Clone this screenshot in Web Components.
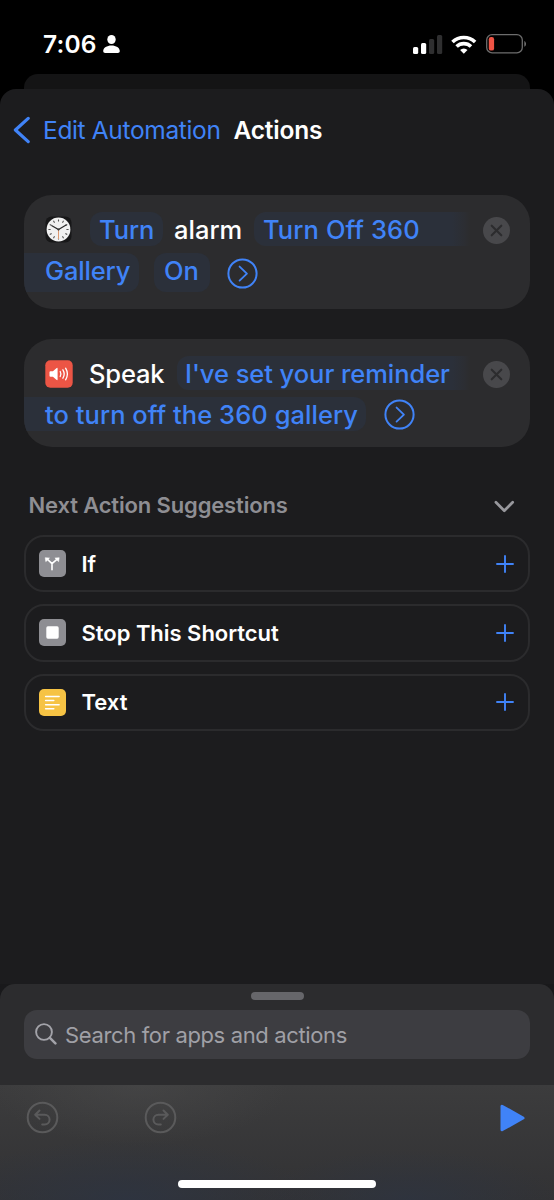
<!DOCTYPE html>
<html lang="en">
<head>
<meta charset="utf-8">
<meta name="viewport" content="width=device-width, initial-scale=1">
<title>Actions</title>
<style>
  html, body {
    margin: 0;
    background: #000;
  }
  body {
    font-family: Inter, "Liberation Sans", sans-serif;
    color: #fff;
    --blue: #4083f7;
    --sheet: #1c1c1e;
    --card: #2c2c2e;
    --token: #2b303a;
  }
</style>
</head>
<body>
<phone-screen>
  <status-bar slot="status" time="7:06"></status-bar>
  <nav-header back="Edit Automation">Actions</nav-header>

  <action-card style="height: 114px; margin-top: 23px">
    <action-line>
      <app-icon name="clock" style="margin: 1px 0 0 21px"></app-icon>
      <param-token style="margin-left: 18px; width: 73px; --ls: -0.1px">Turn</param-token>
      <plain-text style="margin-left: 11px; width: 80px">alarm</plain-text>
      <param-token open-end style="flex: 1; --ls: 0.1px">Turn Off 360</param-token>
    </action-line>
    <action-line style="height: 39px; margin-top: 7px; --lift: -3px">
      <param-token open-start style="width: 115px; --ls: -0.15px">Gallery</param-token>
      <param-token style="margin-left: 15px; width: 56px; --inset: 10px">On</param-token>
      <app-icon name="disclose" style="margin: 2px 0 0 17px"></app-icon>
    </action-line>
  </action-card>

  <action-card style="height: 108px; margin-top: 30px">
    <action-line>
      <app-icon name="speaker" style="margin: 2px 0 0 21px"></app-icon>
      <plain-text style="margin-left: 16px; width: 88px; --ls: -0.15px">Speak</plain-text>
      <param-token open-end style="flex: 1; --ls: -0.05px; --inset: 8px">I've set your reminder</param-token>
    </action-line>
    <action-line style="margin-top: 7px">
      <param-token open-start style="width: 342px; --ls: 0.05px">to turn off the 360 gallery</param-token>
      <app-icon name="disclose" style="margin: 1px 0 0 17.5px"></app-icon>
    </action-line>
  </action-card>

  <suggestion-list heading="Next Action Suggestions">
    <suggestion-row icon="branch">If</suggestion-row>
    <suggestion-row icon="stop">Stop This Shortcut</suggestion-row>
    <suggestion-row icon="text">Text</suggestion-row>
  </suggestion-list>

  <search-panel slot="bottom">Search for apps and actions</search-panel>
  <tool-bar slot="bottom"></tool-bar>
</phone-screen>

<script>
// Small helper: every component renders static markup into an open root
class BaseElement extends HTMLElement {
  constructor() {
    super();
    this.attachShadow({ mode: 'open' });
  }

  connectedCallback() {
    this.shadowRoot.innerHTML = this.render();
  }
}

const ticks = Array.from({ length: 12 }, (_, i) =>
  `<path d="M13.5 3.4v2.2" transform="rotate(${i * 30} 13.5 13.5)"/>`).join('');

// name -> [width, height, svg content]
const ICONS = {
  person: [17, 18, `<g fill="#fff"><ellipse cx="8.5" cy="4.5" rx="4.2" ry="4.5"/><path d="M.2 16C.2 12.6 4 10.4 8.5 10.4S16.8 12.6 16.8 16c0 1.3-.7 1.9-2 1.9H2.2c-1.3 0-2-.6-2-1.9z"/></g>`],
  signal: [30, 19, `<rect x="0" y="12" width="5.2" height="7" rx="1.5" fill="#fff"/><rect x="8" y="8" width="5.2" height="11" rx="1.5" fill="#fff"/><rect x="16" y="4" width="5.2" height="15" rx="1.5" fill="#2f2f30"/><rect x="24" y="0" width="5.2" height="19" rx="1.5" fill="#2f2f30"/>`],
  wifi: [26, 19, `<g fill="none" stroke="#fff" stroke-width="3.6"><path d="M1.5 7a16.3 16.3 0 0 1 22.6 0"/><path d="M5.6 11.5a10.5 10.5 0 0 1 14.4 0"/></g><path d="M12.8 18.8l-3.7-3.9a5.3 5.3 0 0 1 7.4 0z" fill="#fff"/>`],
  battery: [41, 20, `<rect x=".7" y=".7" width="35.6" height="18.2" rx="5.4" fill="none" stroke="#6d6d6d" stroke-width="1.3"/><path d="M38.3 7v5.8c2.3-.9 2.3-4.9 0-5.8z" fill="#6d6d6d"/><rect x="2.8" y="3" width="5.3" height="13.6" rx="2.2" fill="#ee5344"/>`],
  back: [18, 28, `<path d="M16.2 2.4L3.4 14l12.8 11.6" fill="none" stroke="#4083f7" stroke-width="3.2" stroke-linecap="round" stroke-linejoin="round"/>`],
  clock: [27, 27, `<rect x=".5" y=".5" width="26" height="26" rx="6" fill="#171718"/><circle cx="13.5" cy="13.5" r="11.9" fill="#f1f1f1"/><g stroke="#555" stroke-width="1.1">${ticks}</g><path d="M13.5 13.5v9.5" stroke="#dd9a72" stroke-width="1"/><path d="M6.5 9.5l7 4 8-4.8" fill="none" stroke="#2b2b2b" stroke-width="1.2"/><circle cx="13.5" cy="13.5" r="1.1" fill="#333"/>`],
  speaker: [28, 28, `<rect x=".3" y=".3" width="27.4" height="27.4" rx="5" fill="#ec5545"/><path d="M4.5 12.2q0-1 1-1h2.4l3.5-3q1.2-.9 1.2.5v10.6q0 1.4-1.2.5l-3.5-3H5.5q-1 0-1-1z" fill="#fff"/><g fill="none" stroke="#fff" stroke-width="1.3" stroke-linecap="round"><path d="M15.2 11.5a5 5 0 0 1 0 5"/><path d="M17.9 9.8a8 8 0 0 1 0 8.4"/><path d="M20.6 8.2a11 11 0 0 1 0 11.6"/></g>`],
  disclose: [31, 31, `<circle cx="15.5" cy="15.5" r="14.1" fill="none" stroke="#4083f7" stroke-width="2"/><path d="M12.6 8.6l7.3 7-7.3 7" fill="none" stroke="#4083f7" stroke-width="1.9" stroke-linecap="round" stroke-linejoin="round"/>`],
  close: [27, 27, `<circle cx="13.5" cy="13.5" r="13.5" fill="#48484b"/><path d="M8.7 8.7l9.6 9.6m0-9.6l-9.6 9.6" stroke="#2c2c2e" stroke-width="2.1" stroke-linecap="round"/>`],
  chevron: [21, 14, `<path d="M1.9 2.2l8.4 8.6 8.4-8.6" fill="none" stroke="#98989d" stroke-width="2.7" stroke-linecap="round" stroke-linejoin="round"/>`],
  branch: [27, 27, `<rect width="27" height="27" rx="5" fill="#8e8e93"/><path d="M13 19.7v-6l-4.5-4.3M13 13.7l4.9-4.3" fill="none" stroke="#fff" stroke-width="1.6" stroke-linecap="round" stroke-linejoin="round"/><path d="M6.2 7.7l4.3.3-3.7 3.7zM20.2 7.7l-4.3.3 3.7 3.7z" fill="#fff" stroke="#fff" stroke-width=".5" stroke-linejoin="round"/>`],
  stop: [27, 27, `<rect width="27" height="27" rx="5" fill="#8e8e93"/><rect x="7.3" y="7.3" width="12.4" height="12.4" rx="1.6" fill="#fff"/>`],
  text: [27, 27, `<rect width="27" height="27" rx="5" fill="#f6c344"/><path d="M6.6 7.5h13.5M6.6 11.6h8.2M6.6 15.7h13.5M6.6 19.8h8.2" stroke="#fff" stroke-width="1.5" stroke-linecap="round"/>`],
  plus: [18, 18, `<path d="M9 1v16M1 9h16" stroke="#4083f7" stroke-width="1.9" stroke-linecap="round"/>`],
  search: [22, 22, `<circle cx="9" cy="9" r="7.9" fill="none" stroke="#a3a3a9" stroke-width="1.9"/><path d="M14.9 14.9l5.5 5.5" stroke="#a3a3a9" stroke-width="2.5" stroke-linecap="round"/>`],
  undo: [33, 33, `<g fill="none" stroke="#5a5a5b" stroke-width="2" stroke-linecap="round" stroke-linejoin="round"><circle cx="16.5" cy="16.5" r="14.8"/><path d="M13.5 9.5L9.2 13.7l4.3 4.2M9.5 13.7h9.2a4.9 4.9 0 0 1 0 9.8h-2.5"/></g>`],
  redo: [33, 33, `<g fill="none" stroke="#5a5a5b" stroke-width="2" stroke-linecap="round" stroke-linejoin="round"><circle cx="16.5" cy="16.5" r="14.8"/><path d="M19.5 9.5l4.3 4.2-4.3 4.2M23.5 13.7h-9.2a4.9 4.9 0 0 0 0 9.8h2.5"/></g>`],
  play: [25, 28, `<path d="M2 2.2v23.6L23 14z" fill="#4083f7" stroke="#4083f7" stroke-width="3" stroke-linejoin="round"/>`]
};

class AppIcon extends BaseElement {
  render() {
    const [w, h, body] = ICONS[this.getAttribute('name')];
    return `
      <style>
        :host { display: block; flex: none; width: ${w}px; height: ${h}px; }
        svg { display: block; }
      </style>
      <svg width="${w}" height="${h}" viewBox="0 0 ${w} ${h}" aria-hidden="true">${body}</svg>
    `;
  }
}

class PhoneScreen extends BaseElement {
  render() {
    return `
      <style>
        :host {
          display: flex;
          flex-direction: column;
          height: 1200px;
          overflow: hidden;
          background: #000;
        }
        .behind {
          flex: none;
          height: 15px;
          margin: 0 24px;
          border-radius: 14px 14px 0 0;
          background: #141415;
        }
        main {
          flex: 1;
          min-height: 0;
          padding: 0 24px;
          border-radius: 16px 16px 0 0;
          background: var(--sheet);
        }
        .bottom { background: linear-gradient(#19191b, #161618); }
      </style>
      <slot name="status"></slot>
      <div class="behind"></div>
      <main><slot></slot></main>
      <div class="bottom"><slot name="bottom"></slot></div>
    `;
  }
}

class StatusBar extends BaseElement {
  render() {
    return `
      <style>
        :host {
          display: flex;
          align-items: center;
          box-sizing: border-box;
          height: 74px;
          padding: 14px 27px 0 43px;
        }
        .time {
          flex: 1;
          display: flex;
          align-items: center;
          gap: 6px;
          font-size: 24.5px;
          font-weight: 580;
          letter-spacing: 0.2px;
        }
      </style>
      <div class="time"><span>${this.getAttribute('time')}</span><app-icon name="person"></app-icon></div>
      <app-icon name="signal"></app-icon>
      <app-icon name="wifi" style="margin-left: 8px"></app-icon>
      <app-icon name="battery" style="margin-left: 9px"></app-icon>
    `;
  }
}

class NavHeader extends BaseElement {
  render() {
    return `
      <style>
        :host {
          display: flex;
          align-items: center;
          height: 82px;
          margin-left: -12px;
          margin-bottom: 24px;
          font-size: 24.5px;
          white-space: nowrap;
        }
        .back { width: 190.5px; margin-left: 13px; color: var(--blue); letter-spacing: -0.35px; }
        .title { font-weight: 580; letter-spacing: -0.2px; }
      </style>
      <app-icon name="back"></app-icon>
      <span class="back">${this.getAttribute('back')}</span>
      <span class="title"><slot></slot></span>
    `;
  }
}

class ActionCard extends BaseElement {
  render() {
    return `
      <style>
        :host {
          display: grid;
          grid-template-columns: 1fr 60px;
          align-items: start;
          box-sizing: border-box;
          padding-top: 17px;
          border-radius: 28px;
          background: var(--card);
          overflow: hidden;
        }
        app-icon { margin: 5px 0 0 13px; }
      </style>
      <div><slot></slot></div>
      <app-icon name="close"></app-icon>
    `;
  }
}

class ActionLine extends BaseElement {
  render() {
    return `
      <style>
        :host {
          display: flex;
          align-items: center;
          height: 34px;
          font-size: 25.5px;
          font-weight: 470;
          line-height: 34px;
          white-space: nowrap;
        }
      </style>
      <slot></slot>
    `;
  }
}

// Editable value inside an action; open-start / open-end mark a value that wraps
class ParamToken extends BaseElement {
  render() {
    return `
      <style>
        :host {
          display: flex;
          align-items: center;
          box-sizing: border-box;
          height: 100%;
          padding-left: var(--inset, 9px);
          border-radius: 12px;
          background: var(--token);
          color: var(--blue);
          letter-spacing: var(--ls, 0);
        }
        :host([open-start]) { padding-left: 21px; border-radius: 0 12px 12px 0; }
        :host([open-end]) {
          border-radius: 12px 0 0 12px;
          background: linear-gradient(90deg, var(--token) calc(100% - 18px), #2c2e33 calc(100% - 6px), var(--card));
        }
        span { margin-top: var(--lift, 2px); }
      </style>
      <span><slot></slot></span>
    `;
  }
}

class PlainText extends BaseElement {
  render() {
    return `
      <style>
        :host { display: block; flex: none; padding-top: 2px; letter-spacing: var(--ls, 0); }
      </style>
      <slot></slot>
    `;
  }
}

class SuggestionList extends BaseElement {
  render() {
    return `
      <style>
        :host { display: flex; flex-direction: column; gap: 12px; margin-top: 38px; }
        header {
          display: flex;
          align-items: center;
          justify-content: space-between;
          box-sizing: border-box;
          height: 38px;
          padding: 2px 15.5px 0 4.5px;
          color: #8e8e93;
          font-size: 22px;
          font-weight: 570;
          letter-spacing: -0.15px;
        }
        header app-icon { margin-top: 3px; }
      </style>
      <header><span>${this.getAttribute('heading')}</span><app-icon name="chevron"></app-icon></header>
      <slot></slot>
    `;
  }
}

class SuggestionRow extends BaseElement {
  render() {
    return `
      <style>
        :host {
          display: flex;
          align-items: center;
          box-sizing: border-box;
          height: 57.3px;
          padding: 0 14px 0 13px;
          border: 2px solid #2b2b2d;
          border-radius: 20px;
          font-size: 22px;
          font-weight: 570;
          letter-spacing: -0.03px;
        }
        .label { flex: 1; margin-left: 15.5px; }
      </style>
      <app-icon name="${this.getAttribute('icon')}"></app-icon>
      <span class="label"><slot></slot></span>
      <app-icon name="plus"></app-icon>
    `;
  }
}

class SearchPanel extends BaseElement {
  render() {
    return `
      <style>
        :host {
          display: block;
          box-sizing: border-box;
          height: 101px;
          padding: 8px 24px 0;
          border-radius: 15px 15px 0 0;
          background: #2c2c2e;
        }
        .grabber {
          width: 53px;
          height: 8px;
          margin: 0 auto 10px;
          border-radius: 4px;
          background: #66666a;
        }
        .field {
          display: flex;
          align-items: center;
          gap: 8px;
          height: 48.5px;
          padding-left: 11px;
          border-radius: 13px;
          background: #3d3d41;
          color: #a0a0a6;
          font-size: 22px;
        }
        .field span { padding-top: 2px; letter-spacing: -0.36px; }
      </style>
      <div class="grabber"></div>
      <div class="field"><app-icon name="search"></app-icon><span><slot></slot></span></div>
    `;
  }
}

class ToolBar extends BaseElement {
  render() {
    return `
      <style>
        :host {
          display: flex;
          flex-direction: column;
          justify-content: space-between;
          align-items: center;
          box-sizing: border-box;
          height: 115px;
          padding: 16px 0 12px;
          background:
            radial-gradient(ellipse 150px 60px at 25% 0, rgba(80, 80, 80, .4), transparent),
            radial-gradient(ellipse 190px 60px at 23% 100%, rgba(45, 52, 66, .8), transparent),
            radial-gradient(ellipse 150px 50px at 74% 100%, rgba(45, 52, 66, .7), transparent),
            linear-gradient(#3c3c3d, #323234);
        }
        .buttons {
          display: flex;
          align-items: center;
          align-self: stretch;
          padding: 0 29px 0 26px;
        }
        .home {
          width: 198px;
          height: 8px;
          border-radius: 4px;
          background: #fff;
        }
      </style>
      <div class="buttons">
        <app-icon name="undo"></app-icon>
        <app-icon name="redo" style="margin: 0 auto 0 85px"></app-icon>
        <app-icon name="play"></app-icon>
      </div>
      <div class="home"></div>
    `;
  }
}

customElements.define('app-icon', AppIcon);
customElements.define('phone-screen', PhoneScreen);
customElements.define('status-bar', StatusBar);
customElements.define('nav-header', NavHeader);
customElements.define('action-card', ActionCard);
customElements.define('action-line', ActionLine);
customElements.define('param-token', ParamToken);
customElements.define('plain-text', PlainText);
customElements.define('suggestion-list', SuggestionList);
customElements.define('suggestion-row', SuggestionRow);
customElements.define('search-panel', SearchPanel);
customElements.define('tool-bar', ToolBar);
</script>
</body>
</html>
